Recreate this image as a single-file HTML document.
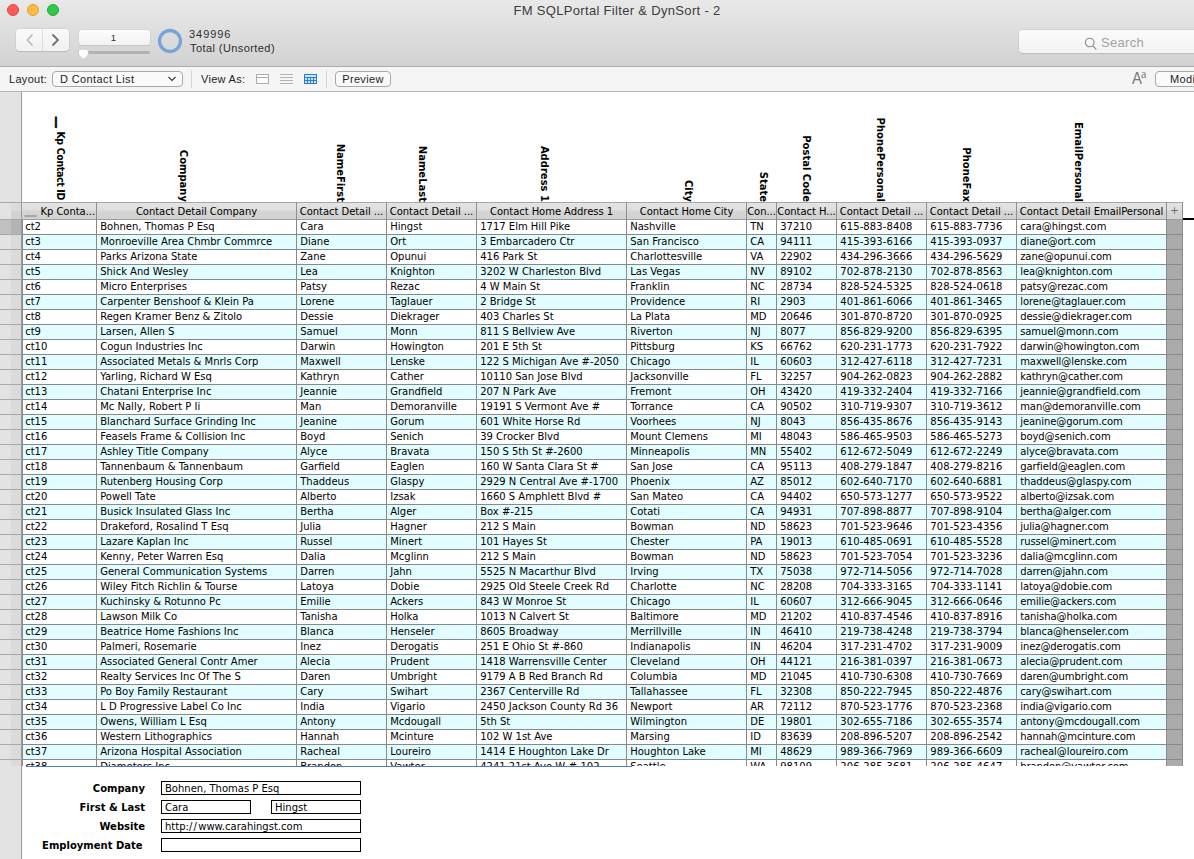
<!DOCTYPE html><html><head><meta charset="utf-8"><title>FM SQLPortal Filter &amp; DynSort - 2</title><style>
*{box-sizing:border-box;margin:0;padding:0}
html,body{width:1194px;height:859px;overflow:hidden;background:#fff}
body{position:relative;font-family:"DejaVu Sans","Liberation Sans",sans-serif;font-size:10px;color:#000}
.abs{position:absolute}
#top{left:0;top:0;width:1194px;height:66px;background:linear-gradient(#e9e9e9,#d2d2d2)}
#topline{left:0;top:66px;width:1194px;height:1px;background:#adadad}
#lbar{left:0;top:67px;width:1194px;height:24px;background:#f5f5f5}
#lbarline{left:0;top:91px;width:1194px;height:1px;background:#b4b4b4}
.sys{font-family:"Liberation Sans",sans-serif}
#title{left:0;top:3px;width:1234px;text-align:center;font-size:13px;letter-spacing:.32px;color:#3c3c3c;white-space:pre}
.tl{width:12px;height:12px;border-radius:50%;top:4px}
#strip{left:0;top:92px;width:21px;height:767px;background:#e3e3e3}
#stripb{left:21px;top:92px;width:1px;height:767px;background:#9a9a9a}
.row{left:22px;width:1144px;height:14px}
.c{position:absolute;top:0;height:14px;line-height:14px;white-space:pre;overflow:hidden;padding-left:3.2px}
.h{position:absolute;top:1px;height:15px;line-height:15px;letter-spacing:-.05px;white-space:pre;overflow:hidden;text-align:center}
.vl{position:absolute;font-weight:bold;white-space:pre;transform-origin:0 0;transform:rotate(90deg);line-height:12px;height:12px;width:105px;text-align:right;top:96.5px}
.lab{position:absolute;font-weight:bold;text-align:right;width:140px;left:5px;height:14px;line-height:14px;margin-top:1px}
.fld{position:absolute;border:1px solid #000;height:14px;line-height:12px;padding-left:3px;padding-top:1px;background:#fff;white-space:pre}
</style></head><body>
<div id="top" class="abs"></div><div id="topline" class="abs"></div><div id="lbar" class="abs"></div><div id="lbarline" class="abs"></div>
<div class="abs tl" style="left:7px;background:#fc5b57;border:1px solid #df4744"></div>
<div class="abs tl" style="left:27px;background:#fdbc40;border:1px solid #de9f34"></div>
<div class="abs tl" style="left:47px;background:#34c84a;border:1px solid #27aa35"></div>
<div id="title" class="abs sys">FM SQLPortal Filter &amp; DynSort - 2</div>
<div class="abs" style="left:16px;top:29px;width:53px;height:22px;border-radius:4px;background:linear-gradient(#fafafa,#f1f1f1);box-shadow:0 0 0 .5px #c8c8c8,0 1px 1px rgba(0,0,0,.18)"></div>
<div class="abs" style="left:42px;top:29px;width:1px;height:22px;background:#dcdcdc"></div>
<svg class="abs" style="left:16px;top:29px" width="53" height="22" viewBox="0 0 53 22"><path d="M16.5 5.5 L11.5 11 L16.5 16.5" fill="none" stroke="#b9b9b9" stroke-width="1.6"/><path d="M36.5 5.5 L42 11 L36.5 16.5" fill="none" stroke="#6e6e6e" stroke-width="1.8"/></svg>
<div class="abs sys" style="left:79px;top:30px;width:71px;height:15px;border-radius:3px;background:linear-gradient(#fcfcfc,#f2f2f2);box-shadow:0 0 0 .5px #cfcfcf,0 1px 1px rgba(0,0,0,.15);text-align:center;font-size:9.5px;line-height:16px;color:#333"><span style="position:relative;left:-1px">1</span></div>
<div class="abs" style="left:84px;top:51px;width:66px;height:3px;border-radius:1.5px;background:#b2b2b2"></div>
<svg class="abs" style="left:77px;top:48px" width="14" height="13" viewBox="0 0 14 13"><path d="M3.8 1.2 h5.4 a2.3 2.3 0 0 1 2.3 2.3 v2.6 q0 .6 -.5 1.1 l-3.8 3.7 q-.7 .6 -1.4 0 l-3.8 -3.7 q-.5 -.5 -.5 -1.1 v-2.6 a2.3 2.3 0 0 1 2.3 -2.3z" fill="#fff" stroke="#c2c2c2" stroke-width=".7"/></svg>
<svg class="abs" style="left:156px;top:27px" width="28" height="28" viewBox="0 0 28 28"><circle cx="14" cy="14" r="10.5" fill="none" stroke="#76a3d9" stroke-width="3.3"/></svg>
<div class="abs sys" style="left:189px;top:28px;font-size:11px;letter-spacing:.95px;line-height:13px;color:#2e2e2e;white-space:pre">349996</div>
<div class="abs sys" style="left:190px;top:42px;font-size:11px;letter-spacing:.42px;line-height:13px;color:#2e2e2e;white-space:pre">Total (Unsorted)</div>
<div class="abs" style="left:1019px;top:30px;width:190px;height:23px;border-radius:4px;background:linear-gradient(#fbfbfb,#f3f3f3);box-shadow:0 0 0 .5px #c6c6c6,0 1px 1px rgba(0,0,0,.15)"></div>
<svg class="abs" style="left:1083px;top:36px" width="16" height="16" viewBox="0 0 16 16"><circle cx="6.7" cy="6.5" r="4.3" fill="none" stroke="#8a8a8a" stroke-width="1.1"/><path d="M9.8 9.8 L13.3 13.3" stroke="#8a8a8a" stroke-width="1.2"/></svg>
<div class="abs sys" style="left:1101px;top:35px;font-size:13px;letter-spacing:.3px;line-height:16px;color:#a2a2a2">Search</div>
<div class="abs sys" style="left:9px;top:72px;font-size:11px;letter-spacing:.3px;line-height:14px;color:#1e1e1e;white-space:pre">Layout:</div>
<div class="abs" style="left:52px;top:71px;width:131px;height:16px;border-radius:4px;border:1px solid #a9a9a9;background:#fafafa"></div>
<div class="abs sys" style="left:60px;top:72px;font-size:11px;letter-spacing:.38px;line-height:14px;color:#1e1e1e;white-space:pre">D Contact List</div>
<svg class="abs" style="left:166px;top:74px" width="12" height="10" viewBox="0 0 12 10"><path d="M2.5 3 L6 6.5 L9.5 3" fill="none" stroke="#3a3a3a" stroke-width="1.1"/></svg>
<div class="abs" style="left:191px;top:70px;width:1px;height:18px;background:#d6d6d6"></div>
<div class="abs sys" style="left:201px;top:72px;font-size:11px;letter-spacing:.3px;line-height:14px;color:#1e1e1e;white-space:pre">View As:</div>
<svg class="abs" style="left:255px;top:73px" width="64" height="12" viewBox="0 0 64 12" shape-rendering="crispEdges"><rect x="1.5" y="1.5" width="12" height="9" fill="#fdfdfd" stroke="#ababab"/><rect x="2" y="4" width="11" height="1" fill="#ababab"/><rect x="25" y="1" width="13" height="1" fill="#b3b3b3"/><rect x="25" y="4" width="13" height="1" fill="#b3b3b3"/><rect x="25" y="7" width="13" height="1" fill="#b3b3b3"/><rect x="25" y="10" width="13" height="1" fill="#b3b3b3"/><rect x="49" y="1" width="13" height="10" fill="#3b77c8"/><rect x="50" y="2" width="11" height="2" fill="#b6f2ff"/><rect x="50" y="5" width="2" height="2" fill="#b6ecff"/><rect x="53" y="5" width="2" height="2" fill="#b6ecff"/><rect x="56" y="5" width="2" height="2" fill="#b6ecff"/><rect x="59" y="5" width="2" height="2" fill="#b6ecff"/><rect x="50" y="8" width="2" height="2" fill="#b6ecff"/><rect x="53" y="8" width="2" height="2" fill="#b6ecff"/><rect x="56" y="8" width="2" height="2" fill="#b6ecff"/><rect x="59" y="8" width="2" height="2" fill="#b6ecff"/></svg>
<div class="abs" style="left:326px;top:70px;width:1px;height:18px;background:#d6d6d6"></div>
<div class="abs sys" style="left:335px;top:71px;width:56px;height:16px;border-radius:4px;border:1px solid #a9a9a9;background:#fafafa;text-align:center;font-size:11px;letter-spacing:.35px;line-height:14px;color:#1e1e1e">Preview</div>
<div class="abs" style="left:1132px;top:68px;font-family:'Liberation Serif',serif;font-size:16px;line-height:20px;color:#777;white-space:pre"><span class="sys" style="font-size:16.5px;display:inline-block;transform:scaleX(.9);transform-origin:0 50%">A</span><span style="font-size:12px;position:relative;top:-6.5px;left:-2px">a</span></div>
<div class="abs sys" style="left:1155px;top:71px;width:60px;height:16px;border-radius:4px;border:1px solid #a9a9a9;background:#fafafa;font-size:11px;letter-spacing:.35px;line-height:14px;color:#1e1e1e;padding-left:14px;white-space:pre">Modify</div>
<div id="strip" class="abs"></div><div id="stripb" class="abs"></div>
<div class="abs" style="left:11px;top:203px;width:10px;height:563px;background:#dbdbdb"></div>
<div class="abs" style="left:0;top:220px;width:11px;height:14px;background:#c1c1c1"></div><div class="abs" style="left:11px;top:220px;width:10px;height:14px;background:#b4b4b4"></div>
<div class="abs" style="left:11px;top:211px;width:10px;height:8px;background:#d2d2d2"></div>
<div class="abs" style="left:0;top:219px;width:22px;height:1px;background:#a9a9a9"></div>
<div class="abs" style="left:0;top:234px;width:22px;height:1px;background:#a9a9a9"></div>
<div class="abs" style="left:0;top:249px;width:22px;height:1px;background:#a9a9a9"></div>
<div class="abs" style="left:0;top:264px;width:22px;height:1px;background:#a9a9a9"></div>
<div class="abs" style="left:0;top:279px;width:22px;height:1px;background:#a9a9a9"></div>
<div class="abs" style="left:0;top:294px;width:22px;height:1px;background:#a9a9a9"></div>
<div class="abs" style="left:0;top:309px;width:22px;height:1px;background:#a9a9a9"></div>
<div class="abs" style="left:0;top:324px;width:22px;height:1px;background:#a9a9a9"></div>
<div class="abs" style="left:0;top:339px;width:22px;height:1px;background:#a9a9a9"></div>
<div class="abs" style="left:0;top:354px;width:22px;height:1px;background:#a9a9a9"></div>
<div class="abs" style="left:0;top:369px;width:22px;height:1px;background:#a9a9a9"></div>
<div class="abs" style="left:0;top:384px;width:22px;height:1px;background:#a9a9a9"></div>
<div class="abs" style="left:0;top:399px;width:22px;height:1px;background:#a9a9a9"></div>
<div class="abs" style="left:0;top:414px;width:22px;height:1px;background:#a9a9a9"></div>
<div class="abs" style="left:0;top:429px;width:22px;height:1px;background:#a9a9a9"></div>
<div class="abs" style="left:0;top:444px;width:22px;height:1px;background:#a9a9a9"></div>
<div class="abs" style="left:0;top:459px;width:22px;height:1px;background:#a9a9a9"></div>
<div class="abs" style="left:0;top:474px;width:22px;height:1px;background:#a9a9a9"></div>
<div class="abs" style="left:0;top:489px;width:22px;height:1px;background:#a9a9a9"></div>
<div class="abs" style="left:0;top:504px;width:22px;height:1px;background:#a9a9a9"></div>
<div class="abs" style="left:0;top:519px;width:22px;height:1px;background:#a9a9a9"></div>
<div class="abs" style="left:0;top:534px;width:22px;height:1px;background:#a9a9a9"></div>
<div class="abs" style="left:0;top:549px;width:22px;height:1px;background:#a9a9a9"></div>
<div class="abs" style="left:0;top:564px;width:22px;height:1px;background:#a9a9a9"></div>
<div class="abs" style="left:0;top:579px;width:22px;height:1px;background:#a9a9a9"></div>
<div class="abs" style="left:0;top:594px;width:22px;height:1px;background:#a9a9a9"></div>
<div class="abs" style="left:0;top:609px;width:22px;height:1px;background:#a9a9a9"></div>
<div class="abs" style="left:0;top:624px;width:22px;height:1px;background:#a9a9a9"></div>
<div class="abs" style="left:0;top:639px;width:22px;height:1px;background:#a9a9a9"></div>
<div class="abs" style="left:0;top:654px;width:22px;height:1px;background:#a9a9a9"></div>
<div class="abs" style="left:0;top:669px;width:22px;height:1px;background:#a9a9a9"></div>
<div class="abs" style="left:0;top:684px;width:22px;height:1px;background:#a9a9a9"></div>
<div class="abs" style="left:0;top:699px;width:22px;height:1px;background:#a9a9a9"></div>
<div class="abs" style="left:0;top:714px;width:22px;height:1px;background:#a9a9a9"></div>
<div class="abs" style="left:0;top:729px;width:22px;height:1px;background:#a9a9a9"></div>
<div class="abs" style="left:0;top:744px;width:22px;height:1px;background:#a9a9a9"></div>
<div class="abs" style="left:0;top:759px;width:22px;height:1px;background:#a9a9a9"></div>
<div class="vl" style="left:66.5px;top:94.5px;letter-spacing:-.35px;font-size:10.5px;font-family:'DejaVu Sans Condensed','DejaVu Sans',sans-serif"><span style="letter-spacing:0;font-size:13px;position:relative;top:-1.5px;text-shadow:0 -1px 0 #000">__</span><span style="letter-spacing:0"> </span>Kp Contact ID</div>
<div class="vl" style="left:189px">Company</div>
<div class="vl" style="left:346px">NameFirst</div>
<div class="vl" style="left:428px">NameLast</div>
<div class="vl" style="left:550px">Address 1</div>
<div class="vl" style="left:694px">City</div>
<div class="vl" style="left:769px">State</div>
<div class="vl" style="left:811.5px">Postal Code</div>
<div class="vl" style="left:885.5px">PhonePersonal</div>
<div class="vl" style="left:971.5px">PhoneFax</div>
<div class="vl" style="left:1083.5px">EmailPersonal</div>
<div class="abs" style="left:0;top:202px;width:1183px;height:1px;background:#a8a8a8"></div>
<div class="abs" style="left:22px;top:203px;width:1160px;height:16px;background:linear-gradient(#e3e3e3 0,#dfdfdf 46%,#d5d5d5 48%,#d2d2d2 100%)">
<div class="h" style="left:0px;width:74px;text-align:left;padding-left:2.5px"><span style="color:#a8a8a8;font-weight:bold;font-size:12px;letter-spacing:0;position:relative;top:-1.5px;text-shadow:0 -1px 0 #a8a8a8">__</span><span style="margin-left:4px">Kp Conta...</span></div>
<div class="h" style="left:75px;width:199px">Contact Detail Company</div>
<div class="h" style="left:275px;width:89px">Contact Detail ...</div>
<div class="h" style="left:365px;width:89px">Contact Detail ...</div>
<div class="h" style="left:455px;width:149px">Contact Home Address 1</div>
<div class="h" style="left:605px;width:119px">Contact Home City</div>
<div class="h" style="left:725px;width:29px">Con...</div>
<div class="h" style="left:755px;width:59px">Contact H...</div>
<div class="h" style="left:815px;width:89px">Contact Detail ...</div>
<div class="h" style="left:905px;width:89px">Contact Detail ...</div>
<div class="h" style="left:995px;width:149px">Contact Detail EmailPersonal</div>
<div class="h" style="left:1145px;width:15px;color:#666;top:0">+</div>
</div>
<div class="abs row" style="top:220px;background:#fff">
<div class="c" style="left:0px;width:74px">ct2</div>
<div class="c" style="left:75px;width:199px">Bohnen, Thomas P Esq</div>
<div class="c" style="left:275px;width:89px">Cara</div>
<div class="c" style="left:365px;width:89px">Hingst</div>
<div class="c" style="left:455px;width:149px">1717 Elm Hill Pike</div>
<div class="c" style="left:605px;width:119px">Nashville</div>
<div class="c" style="left:725px;width:29px">TN</div>
<div class="c" style="left:755px;width:59px">37210</div>
<div class="c" style="left:815px;width:89px;letter-spacing:.12px">615-883-8408</div>
<div class="c" style="left:905px;width:89px;letter-spacing:.12px">615-883-7736</div>
<div class="c" style="left:995px;width:149px;letter-spacing:-.08px">cara@hingst.com</div>
</div>
<div class="abs row" style="top:235px;background:#e2fdff">
<div class="c" style="left:0px;width:74px">ct3</div>
<div class="c" style="left:75px;width:199px">Monroeville Area Chmbr Commrce</div>
<div class="c" style="left:275px;width:89px">Diane</div>
<div class="c" style="left:365px;width:89px">Ort</div>
<div class="c" style="left:455px;width:149px">3 Embarcadero Ctr</div>
<div class="c" style="left:605px;width:119px">San Francisco</div>
<div class="c" style="left:725px;width:29px">CA</div>
<div class="c" style="left:755px;width:59px">94111</div>
<div class="c" style="left:815px;width:89px;letter-spacing:.12px">415-393-6166</div>
<div class="c" style="left:905px;width:89px;letter-spacing:.12px">415-393-0937</div>
<div class="c" style="left:995px;width:149px;letter-spacing:-.08px">diane@ort.com</div>
</div>
<div class="abs row" style="top:250px;background:#fff">
<div class="c" style="left:0px;width:74px">ct4</div>
<div class="c" style="left:75px;width:199px">Parks Arizona State</div>
<div class="c" style="left:275px;width:89px">Zane</div>
<div class="c" style="left:365px;width:89px">Opunui</div>
<div class="c" style="left:455px;width:149px">416 Park St</div>
<div class="c" style="left:605px;width:119px">Charlottesville</div>
<div class="c" style="left:725px;width:29px">VA</div>
<div class="c" style="left:755px;width:59px">22902</div>
<div class="c" style="left:815px;width:89px;letter-spacing:.12px">434-296-3666</div>
<div class="c" style="left:905px;width:89px;letter-spacing:.12px">434-296-5629</div>
<div class="c" style="left:995px;width:149px;letter-spacing:-.08px">zane@opunui.com</div>
</div>
<div class="abs row" style="top:265px;background:#e2fdff">
<div class="c" style="left:0px;width:74px">ct5</div>
<div class="c" style="left:75px;width:199px">Shick And Wesley</div>
<div class="c" style="left:275px;width:89px">Lea</div>
<div class="c" style="left:365px;width:89px">Knighton</div>
<div class="c" style="left:455px;width:149px">3202 W Charleston Blvd</div>
<div class="c" style="left:605px;width:119px">Las Vegas</div>
<div class="c" style="left:725px;width:29px">NV</div>
<div class="c" style="left:755px;width:59px">89102</div>
<div class="c" style="left:815px;width:89px;letter-spacing:.12px">702-878-2130</div>
<div class="c" style="left:905px;width:89px;letter-spacing:.12px">702-878-8563</div>
<div class="c" style="left:995px;width:149px;letter-spacing:-.08px">lea@knighton.com</div>
</div>
<div class="abs row" style="top:280px;background:#fff">
<div class="c" style="left:0px;width:74px">ct6</div>
<div class="c" style="left:75px;width:199px">Micro Enterprises</div>
<div class="c" style="left:275px;width:89px">Patsy</div>
<div class="c" style="left:365px;width:89px">Rezac</div>
<div class="c" style="left:455px;width:149px">4 W Main St</div>
<div class="c" style="left:605px;width:119px">Franklin</div>
<div class="c" style="left:725px;width:29px">NC</div>
<div class="c" style="left:755px;width:59px">28734</div>
<div class="c" style="left:815px;width:89px;letter-spacing:.12px">828-524-5325</div>
<div class="c" style="left:905px;width:89px;letter-spacing:.12px">828-524-0618</div>
<div class="c" style="left:995px;width:149px;letter-spacing:-.08px">patsy@rezac.com</div>
</div>
<div class="abs row" style="top:295px;background:#e2fdff">
<div class="c" style="left:0px;width:74px">ct7</div>
<div class="c" style="left:75px;width:199px">Carpenter Benshoof &amp; Klein Pa</div>
<div class="c" style="left:275px;width:89px">Lorene</div>
<div class="c" style="left:365px;width:89px">Taglauer</div>
<div class="c" style="left:455px;width:149px">2 Bridge St</div>
<div class="c" style="left:605px;width:119px">Providence</div>
<div class="c" style="left:725px;width:29px">RI</div>
<div class="c" style="left:755px;width:59px">2903</div>
<div class="c" style="left:815px;width:89px;letter-spacing:.12px">401-861-6066</div>
<div class="c" style="left:905px;width:89px;letter-spacing:.12px">401-861-3465</div>
<div class="c" style="left:995px;width:149px;letter-spacing:-.08px">lorene@taglauer.com</div>
</div>
<div class="abs row" style="top:310px;background:#fff">
<div class="c" style="left:0px;width:74px">ct8</div>
<div class="c" style="left:75px;width:199px">Regen Kramer Benz &amp; Zitolo</div>
<div class="c" style="left:275px;width:89px">Dessie</div>
<div class="c" style="left:365px;width:89px">Diekrager</div>
<div class="c" style="left:455px;width:149px">403 Charles St</div>
<div class="c" style="left:605px;width:119px">La Plata</div>
<div class="c" style="left:725px;width:29px">MD</div>
<div class="c" style="left:755px;width:59px">20646</div>
<div class="c" style="left:815px;width:89px;letter-spacing:.12px">301-870-8720</div>
<div class="c" style="left:905px;width:89px;letter-spacing:.12px">301-870-0925</div>
<div class="c" style="left:995px;width:149px;letter-spacing:-.08px">dessie@diekrager.com</div>
</div>
<div class="abs row" style="top:325px;background:#e2fdff">
<div class="c" style="left:0px;width:74px">ct9</div>
<div class="c" style="left:75px;width:199px">Larsen, Allen S</div>
<div class="c" style="left:275px;width:89px">Samuel</div>
<div class="c" style="left:365px;width:89px">Monn</div>
<div class="c" style="left:455px;width:149px">811 S Bellview Ave</div>
<div class="c" style="left:605px;width:119px">Riverton</div>
<div class="c" style="left:725px;width:29px">NJ</div>
<div class="c" style="left:755px;width:59px">8077</div>
<div class="c" style="left:815px;width:89px;letter-spacing:.12px">856-829-9200</div>
<div class="c" style="left:905px;width:89px;letter-spacing:.12px">856-829-6395</div>
<div class="c" style="left:995px;width:149px;letter-spacing:-.08px">samuel@monn.com</div>
</div>
<div class="abs row" style="top:340px;background:#fff">
<div class="c" style="left:0px;width:74px">ct10</div>
<div class="c" style="left:75px;width:199px">Cogun Industries Inc</div>
<div class="c" style="left:275px;width:89px">Darwin</div>
<div class="c" style="left:365px;width:89px">Howington</div>
<div class="c" style="left:455px;width:149px">201 E 5th St</div>
<div class="c" style="left:605px;width:119px">Pittsburg</div>
<div class="c" style="left:725px;width:29px">KS</div>
<div class="c" style="left:755px;width:59px">66762</div>
<div class="c" style="left:815px;width:89px;letter-spacing:.12px">620-231-1773</div>
<div class="c" style="left:905px;width:89px;letter-spacing:.12px">620-231-7922</div>
<div class="c" style="left:995px;width:149px;letter-spacing:-.08px">darwin@howington.com</div>
</div>
<div class="abs row" style="top:355px;background:#e2fdff">
<div class="c" style="left:0px;width:74px">ct11</div>
<div class="c" style="left:75px;width:199px">Associated Metals &amp; Mnrls Corp</div>
<div class="c" style="left:275px;width:89px">Maxwell</div>
<div class="c" style="left:365px;width:89px">Lenske</div>
<div class="c" style="left:455px;width:149px">122 S Michigan Ave #-2050</div>
<div class="c" style="left:605px;width:119px">Chicago</div>
<div class="c" style="left:725px;width:29px">IL</div>
<div class="c" style="left:755px;width:59px">60603</div>
<div class="c" style="left:815px;width:89px;letter-spacing:.12px">312-427-6118</div>
<div class="c" style="left:905px;width:89px;letter-spacing:.12px">312-427-7231</div>
<div class="c" style="left:995px;width:149px;letter-spacing:-.08px">maxwell@lenske.com</div>
</div>
<div class="abs row" style="top:370px;background:#fff">
<div class="c" style="left:0px;width:74px">ct12</div>
<div class="c" style="left:75px;width:199px">Yarling, Richard W Esq</div>
<div class="c" style="left:275px;width:89px">Kathryn</div>
<div class="c" style="left:365px;width:89px">Cather</div>
<div class="c" style="left:455px;width:149px">10110 San Jose Blvd</div>
<div class="c" style="left:605px;width:119px">Jacksonville</div>
<div class="c" style="left:725px;width:29px">FL</div>
<div class="c" style="left:755px;width:59px">32257</div>
<div class="c" style="left:815px;width:89px;letter-spacing:.12px">904-262-0823</div>
<div class="c" style="left:905px;width:89px;letter-spacing:.12px">904-262-2882</div>
<div class="c" style="left:995px;width:149px;letter-spacing:-.08px">kathryn@cather.com</div>
</div>
<div class="abs row" style="top:385px;background:#e2fdff">
<div class="c" style="left:0px;width:74px">ct13</div>
<div class="c" style="left:75px;width:199px">Chatani Enterprise Inc</div>
<div class="c" style="left:275px;width:89px">Jeannie</div>
<div class="c" style="left:365px;width:89px">Grandfield</div>
<div class="c" style="left:455px;width:149px">207 N Park Ave</div>
<div class="c" style="left:605px;width:119px">Fremont</div>
<div class="c" style="left:725px;width:29px">OH</div>
<div class="c" style="left:755px;width:59px">43420</div>
<div class="c" style="left:815px;width:89px;letter-spacing:.12px">419-332-2404</div>
<div class="c" style="left:905px;width:89px;letter-spacing:.12px">419-332-7166</div>
<div class="c" style="left:995px;width:149px;letter-spacing:-.08px">jeannie@grandfield.com</div>
</div>
<div class="abs row" style="top:400px;background:#fff">
<div class="c" style="left:0px;width:74px">ct14</div>
<div class="c" style="left:75px;width:199px">Mc Nally, Robert P Ii</div>
<div class="c" style="left:275px;width:89px">Man</div>
<div class="c" style="left:365px;width:89px">Demoranville</div>
<div class="c" style="left:455px;width:149px">19191 S Vermont Ave #</div>
<div class="c" style="left:605px;width:119px">Torrance</div>
<div class="c" style="left:725px;width:29px">CA</div>
<div class="c" style="left:755px;width:59px">90502</div>
<div class="c" style="left:815px;width:89px;letter-spacing:.12px">310-719-9307</div>
<div class="c" style="left:905px;width:89px;letter-spacing:.12px">310-719-3612</div>
<div class="c" style="left:995px;width:149px;letter-spacing:-.08px">man@demoranville.com</div>
</div>
<div class="abs row" style="top:415px;background:#e2fdff">
<div class="c" style="left:0px;width:74px">ct15</div>
<div class="c" style="left:75px;width:199px">Blanchard Surface Grinding Inc</div>
<div class="c" style="left:275px;width:89px">Jeanine</div>
<div class="c" style="left:365px;width:89px">Gorum</div>
<div class="c" style="left:455px;width:149px">601 White Horse Rd</div>
<div class="c" style="left:605px;width:119px">Voorhees</div>
<div class="c" style="left:725px;width:29px">NJ</div>
<div class="c" style="left:755px;width:59px">8043</div>
<div class="c" style="left:815px;width:89px;letter-spacing:.12px">856-435-8676</div>
<div class="c" style="left:905px;width:89px;letter-spacing:.12px">856-435-9143</div>
<div class="c" style="left:995px;width:149px;letter-spacing:-.08px">jeanine@gorum.com</div>
</div>
<div class="abs row" style="top:430px;background:#fff">
<div class="c" style="left:0px;width:74px">ct16</div>
<div class="c" style="left:75px;width:199px">Feasels Frame &amp; Collision Inc</div>
<div class="c" style="left:275px;width:89px">Boyd</div>
<div class="c" style="left:365px;width:89px">Senich</div>
<div class="c" style="left:455px;width:149px">39 Crocker Blvd</div>
<div class="c" style="left:605px;width:119px">Mount Clemens</div>
<div class="c" style="left:725px;width:29px">MI</div>
<div class="c" style="left:755px;width:59px">48043</div>
<div class="c" style="left:815px;width:89px;letter-spacing:.12px">586-465-9503</div>
<div class="c" style="left:905px;width:89px;letter-spacing:.12px">586-465-5273</div>
<div class="c" style="left:995px;width:149px;letter-spacing:-.08px">boyd@senich.com</div>
</div>
<div class="abs row" style="top:445px;background:#e2fdff">
<div class="c" style="left:0px;width:74px">ct17</div>
<div class="c" style="left:75px;width:199px">Ashley Title Company</div>
<div class="c" style="left:275px;width:89px">Alyce</div>
<div class="c" style="left:365px;width:89px">Bravata</div>
<div class="c" style="left:455px;width:149px">150 S 5th St #-2600</div>
<div class="c" style="left:605px;width:119px">Minneapolis</div>
<div class="c" style="left:725px;width:29px">MN</div>
<div class="c" style="left:755px;width:59px">55402</div>
<div class="c" style="left:815px;width:89px;letter-spacing:.12px">612-672-5049</div>
<div class="c" style="left:905px;width:89px;letter-spacing:.12px">612-672-2249</div>
<div class="c" style="left:995px;width:149px;letter-spacing:-.08px">alyce@bravata.com</div>
</div>
<div class="abs row" style="top:460px;background:#fff">
<div class="c" style="left:0px;width:74px">ct18</div>
<div class="c" style="left:75px;width:199px">Tannenbaum &amp; Tannenbaum</div>
<div class="c" style="left:275px;width:89px">Garfield</div>
<div class="c" style="left:365px;width:89px">Eaglen</div>
<div class="c" style="left:455px;width:149px">160 W Santa Clara St #</div>
<div class="c" style="left:605px;width:119px">San Jose</div>
<div class="c" style="left:725px;width:29px">CA</div>
<div class="c" style="left:755px;width:59px">95113</div>
<div class="c" style="left:815px;width:89px;letter-spacing:.12px">408-279-1847</div>
<div class="c" style="left:905px;width:89px;letter-spacing:.12px">408-279-8216</div>
<div class="c" style="left:995px;width:149px;letter-spacing:-.08px">garfield@eaglen.com</div>
</div>
<div class="abs row" style="top:475px;background:#e2fdff">
<div class="c" style="left:0px;width:74px">ct19</div>
<div class="c" style="left:75px;width:199px">Rutenberg Housing Corp</div>
<div class="c" style="left:275px;width:89px">Thaddeus</div>
<div class="c" style="left:365px;width:89px">Glaspy</div>
<div class="c" style="left:455px;width:149px">2929 N Central Ave #-1700</div>
<div class="c" style="left:605px;width:119px">Phoenix</div>
<div class="c" style="left:725px;width:29px">AZ</div>
<div class="c" style="left:755px;width:59px">85012</div>
<div class="c" style="left:815px;width:89px;letter-spacing:.12px">602-640-7170</div>
<div class="c" style="left:905px;width:89px;letter-spacing:.12px">602-640-6881</div>
<div class="c" style="left:995px;width:149px;letter-spacing:-.08px">thaddeus@glaspy.com</div>
</div>
<div class="abs row" style="top:490px;background:#fff">
<div class="c" style="left:0px;width:74px">ct20</div>
<div class="c" style="left:75px;width:199px">Powell Tate</div>
<div class="c" style="left:275px;width:89px">Alberto</div>
<div class="c" style="left:365px;width:89px">Izsak</div>
<div class="c" style="left:455px;width:149px">1660 S Amphlett Blvd #</div>
<div class="c" style="left:605px;width:119px">San Mateo</div>
<div class="c" style="left:725px;width:29px">CA</div>
<div class="c" style="left:755px;width:59px">94402</div>
<div class="c" style="left:815px;width:89px;letter-spacing:.12px">650-573-1277</div>
<div class="c" style="left:905px;width:89px;letter-spacing:.12px">650-573-9522</div>
<div class="c" style="left:995px;width:149px;letter-spacing:-.08px">alberto@izsak.com</div>
</div>
<div class="abs row" style="top:505px;background:#e2fdff">
<div class="c" style="left:0px;width:74px">ct21</div>
<div class="c" style="left:75px;width:199px">Busick Insulated Glass Inc</div>
<div class="c" style="left:275px;width:89px">Bertha</div>
<div class="c" style="left:365px;width:89px">Alger</div>
<div class="c" style="left:455px;width:149px">Box #-215</div>
<div class="c" style="left:605px;width:119px">Cotati</div>
<div class="c" style="left:725px;width:29px">CA</div>
<div class="c" style="left:755px;width:59px">94931</div>
<div class="c" style="left:815px;width:89px;letter-spacing:.12px">707-898-8877</div>
<div class="c" style="left:905px;width:89px;letter-spacing:.12px">707-898-9104</div>
<div class="c" style="left:995px;width:149px;letter-spacing:-.08px">bertha@alger.com</div>
</div>
<div class="abs row" style="top:520px;background:#fff">
<div class="c" style="left:0px;width:74px">ct22</div>
<div class="c" style="left:75px;width:199px">Drakeford, Rosalind T Esq</div>
<div class="c" style="left:275px;width:89px">Julia</div>
<div class="c" style="left:365px;width:89px">Hagner</div>
<div class="c" style="left:455px;width:149px">212 S Main</div>
<div class="c" style="left:605px;width:119px">Bowman</div>
<div class="c" style="left:725px;width:29px">ND</div>
<div class="c" style="left:755px;width:59px">58623</div>
<div class="c" style="left:815px;width:89px;letter-spacing:.12px">701-523-9646</div>
<div class="c" style="left:905px;width:89px;letter-spacing:.12px">701-523-4356</div>
<div class="c" style="left:995px;width:149px;letter-spacing:-.08px">julia@hagner.com</div>
</div>
<div class="abs row" style="top:535px;background:#e2fdff">
<div class="c" style="left:0px;width:74px">ct23</div>
<div class="c" style="left:75px;width:199px">Lazare Kaplan Inc</div>
<div class="c" style="left:275px;width:89px">Russel</div>
<div class="c" style="left:365px;width:89px">Minert</div>
<div class="c" style="left:455px;width:149px">101 Hayes St</div>
<div class="c" style="left:605px;width:119px">Chester</div>
<div class="c" style="left:725px;width:29px">PA</div>
<div class="c" style="left:755px;width:59px">19013</div>
<div class="c" style="left:815px;width:89px;letter-spacing:.12px">610-485-0691</div>
<div class="c" style="left:905px;width:89px;letter-spacing:.12px">610-485-5528</div>
<div class="c" style="left:995px;width:149px;letter-spacing:-.08px">russel@minert.com</div>
</div>
<div class="abs row" style="top:550px;background:#fff">
<div class="c" style="left:0px;width:74px">ct24</div>
<div class="c" style="left:75px;width:199px">Kenny, Peter Warren Esq</div>
<div class="c" style="left:275px;width:89px">Dalia</div>
<div class="c" style="left:365px;width:89px">Mcglinn</div>
<div class="c" style="left:455px;width:149px">212 S Main</div>
<div class="c" style="left:605px;width:119px">Bowman</div>
<div class="c" style="left:725px;width:29px">ND</div>
<div class="c" style="left:755px;width:59px">58623</div>
<div class="c" style="left:815px;width:89px;letter-spacing:.12px">701-523-7054</div>
<div class="c" style="left:905px;width:89px;letter-spacing:.12px">701-523-3236</div>
<div class="c" style="left:995px;width:149px;letter-spacing:-.08px">dalia@mcglinn.com</div>
</div>
<div class="abs row" style="top:565px;background:#e2fdff">
<div class="c" style="left:0px;width:74px">ct25</div>
<div class="c" style="left:75px;width:199px">General Communication Systems</div>
<div class="c" style="left:275px;width:89px">Darren</div>
<div class="c" style="left:365px;width:89px">Jahn</div>
<div class="c" style="left:455px;width:149px">5525 N Macarthur Blvd</div>
<div class="c" style="left:605px;width:119px">Irving</div>
<div class="c" style="left:725px;width:29px">TX</div>
<div class="c" style="left:755px;width:59px">75038</div>
<div class="c" style="left:815px;width:89px;letter-spacing:.12px">972-714-5056</div>
<div class="c" style="left:905px;width:89px;letter-spacing:.12px">972-714-7028</div>
<div class="c" style="left:995px;width:149px;letter-spacing:-.08px">darren@jahn.com</div>
</div>
<div class="abs row" style="top:580px;background:#fff">
<div class="c" style="left:0px;width:74px">ct26</div>
<div class="c" style="left:75px;width:199px">Wiley Fitch Richlin &amp; Tourse</div>
<div class="c" style="left:275px;width:89px">Latoya</div>
<div class="c" style="left:365px;width:89px">Dobie</div>
<div class="c" style="left:455px;width:149px">2925 Old Steele Creek Rd</div>
<div class="c" style="left:605px;width:119px">Charlotte</div>
<div class="c" style="left:725px;width:29px">NC</div>
<div class="c" style="left:755px;width:59px">28208</div>
<div class="c" style="left:815px;width:89px;letter-spacing:.12px">704-333-3165</div>
<div class="c" style="left:905px;width:89px;letter-spacing:.12px">704-333-1141</div>
<div class="c" style="left:995px;width:149px;letter-spacing:-.08px">latoya@dobie.com</div>
</div>
<div class="abs row" style="top:595px;background:#e2fdff">
<div class="c" style="left:0px;width:74px">ct27</div>
<div class="c" style="left:75px;width:199px">Kuchinsky &amp; Rotunno Pc</div>
<div class="c" style="left:275px;width:89px">Emilie</div>
<div class="c" style="left:365px;width:89px">Ackers</div>
<div class="c" style="left:455px;width:149px">843 W Monroe St</div>
<div class="c" style="left:605px;width:119px">Chicago</div>
<div class="c" style="left:725px;width:29px">IL</div>
<div class="c" style="left:755px;width:59px">60607</div>
<div class="c" style="left:815px;width:89px;letter-spacing:.12px">312-666-9045</div>
<div class="c" style="left:905px;width:89px;letter-spacing:.12px">312-666-0646</div>
<div class="c" style="left:995px;width:149px;letter-spacing:-.08px">emilie@ackers.com</div>
</div>
<div class="abs row" style="top:610px;background:#fff">
<div class="c" style="left:0px;width:74px">ct28</div>
<div class="c" style="left:75px;width:199px">Lawson Milk Co</div>
<div class="c" style="left:275px;width:89px">Tanisha</div>
<div class="c" style="left:365px;width:89px">Holka</div>
<div class="c" style="left:455px;width:149px">1013 N Calvert St</div>
<div class="c" style="left:605px;width:119px">Baltimore</div>
<div class="c" style="left:725px;width:29px">MD</div>
<div class="c" style="left:755px;width:59px">21202</div>
<div class="c" style="left:815px;width:89px;letter-spacing:.12px">410-837-4546</div>
<div class="c" style="left:905px;width:89px;letter-spacing:.12px">410-837-8916</div>
<div class="c" style="left:995px;width:149px;letter-spacing:-.08px">tanisha@holka.com</div>
</div>
<div class="abs row" style="top:625px;background:#e2fdff">
<div class="c" style="left:0px;width:74px">ct29</div>
<div class="c" style="left:75px;width:199px">Beatrice Home Fashions Inc</div>
<div class="c" style="left:275px;width:89px">Blanca</div>
<div class="c" style="left:365px;width:89px">Henseler</div>
<div class="c" style="left:455px;width:149px">8605 Broadway</div>
<div class="c" style="left:605px;width:119px">Merrillville</div>
<div class="c" style="left:725px;width:29px">IN</div>
<div class="c" style="left:755px;width:59px">46410</div>
<div class="c" style="left:815px;width:89px;letter-spacing:.12px">219-738-4248</div>
<div class="c" style="left:905px;width:89px;letter-spacing:.12px">219-738-3794</div>
<div class="c" style="left:995px;width:149px;letter-spacing:-.08px">blanca@henseler.com</div>
</div>
<div class="abs row" style="top:640px;background:#fff">
<div class="c" style="left:0px;width:74px">ct30</div>
<div class="c" style="left:75px;width:199px">Palmeri, Rosemarie</div>
<div class="c" style="left:275px;width:89px">Inez</div>
<div class="c" style="left:365px;width:89px">Derogatis</div>
<div class="c" style="left:455px;width:149px">251 E Ohio St #-860</div>
<div class="c" style="left:605px;width:119px">Indianapolis</div>
<div class="c" style="left:725px;width:29px">IN</div>
<div class="c" style="left:755px;width:59px">46204</div>
<div class="c" style="left:815px;width:89px;letter-spacing:.12px">317-231-4702</div>
<div class="c" style="left:905px;width:89px;letter-spacing:.12px">317-231-9009</div>
<div class="c" style="left:995px;width:149px;letter-spacing:-.08px">inez@derogatis.com</div>
</div>
<div class="abs row" style="top:655px;background:#e2fdff">
<div class="c" style="left:0px;width:74px">ct31</div>
<div class="c" style="left:75px;width:199px">Associated General Contr Amer</div>
<div class="c" style="left:275px;width:89px">Alecia</div>
<div class="c" style="left:365px;width:89px">Prudent</div>
<div class="c" style="left:455px;width:149px">1418 Warrensville Center</div>
<div class="c" style="left:605px;width:119px">Cleveland</div>
<div class="c" style="left:725px;width:29px">OH</div>
<div class="c" style="left:755px;width:59px">44121</div>
<div class="c" style="left:815px;width:89px;letter-spacing:.12px">216-381-0397</div>
<div class="c" style="left:905px;width:89px;letter-spacing:.12px">216-381-0673</div>
<div class="c" style="left:995px;width:149px;letter-spacing:-.08px">alecia@prudent.com</div>
</div>
<div class="abs row" style="top:670px;background:#fff">
<div class="c" style="left:0px;width:74px">ct32</div>
<div class="c" style="left:75px;width:199px">Realty Services Inc Of The S</div>
<div class="c" style="left:275px;width:89px">Daren</div>
<div class="c" style="left:365px;width:89px">Umbright</div>
<div class="c" style="left:455px;width:149px">9179 A B Red Branch Rd</div>
<div class="c" style="left:605px;width:119px">Columbia</div>
<div class="c" style="left:725px;width:29px">MD</div>
<div class="c" style="left:755px;width:59px">21045</div>
<div class="c" style="left:815px;width:89px;letter-spacing:.12px">410-730-6308</div>
<div class="c" style="left:905px;width:89px;letter-spacing:.12px">410-730-7669</div>
<div class="c" style="left:995px;width:149px;letter-spacing:-.08px">daren@umbright.com</div>
</div>
<div class="abs row" style="top:685px;background:#e2fdff">
<div class="c" style="left:0px;width:74px">ct33</div>
<div class="c" style="left:75px;width:199px">Po Boy Family Restaurant</div>
<div class="c" style="left:275px;width:89px">Cary</div>
<div class="c" style="left:365px;width:89px">Swihart</div>
<div class="c" style="left:455px;width:149px">2367 Centerville Rd</div>
<div class="c" style="left:605px;width:119px">Tallahassee</div>
<div class="c" style="left:725px;width:29px">FL</div>
<div class="c" style="left:755px;width:59px">32308</div>
<div class="c" style="left:815px;width:89px;letter-spacing:.12px">850-222-7945</div>
<div class="c" style="left:905px;width:89px;letter-spacing:.12px">850-222-4876</div>
<div class="c" style="left:995px;width:149px;letter-spacing:-.08px">cary@swihart.com</div>
</div>
<div class="abs row" style="top:700px;background:#fff">
<div class="c" style="left:0px;width:74px">ct34</div>
<div class="c" style="left:75px;width:199px">L D Progressive Label Co Inc</div>
<div class="c" style="left:275px;width:89px">India</div>
<div class="c" style="left:365px;width:89px">Vigario</div>
<div class="c" style="left:455px;width:149px">2450 Jackson County Rd 36</div>
<div class="c" style="left:605px;width:119px">Newport</div>
<div class="c" style="left:725px;width:29px">AR</div>
<div class="c" style="left:755px;width:59px">72112</div>
<div class="c" style="left:815px;width:89px;letter-spacing:.12px">870-523-1776</div>
<div class="c" style="left:905px;width:89px;letter-spacing:.12px">870-523-2368</div>
<div class="c" style="left:995px;width:149px;letter-spacing:-.08px">india@vigario.com</div>
</div>
<div class="abs row" style="top:715px;background:#e2fdff">
<div class="c" style="left:0px;width:74px">ct35</div>
<div class="c" style="left:75px;width:199px">Owens, William L Esq</div>
<div class="c" style="left:275px;width:89px">Antony</div>
<div class="c" style="left:365px;width:89px">Mcdougall</div>
<div class="c" style="left:455px;width:149px">5th St</div>
<div class="c" style="left:605px;width:119px">Wilmington</div>
<div class="c" style="left:725px;width:29px">DE</div>
<div class="c" style="left:755px;width:59px">19801</div>
<div class="c" style="left:815px;width:89px;letter-spacing:.12px">302-655-7186</div>
<div class="c" style="left:905px;width:89px;letter-spacing:.12px">302-655-3574</div>
<div class="c" style="left:995px;width:149px;letter-spacing:-.08px">antony@mcdougall.com</div>
</div>
<div class="abs row" style="top:730px;background:#fff">
<div class="c" style="left:0px;width:74px">ct36</div>
<div class="c" style="left:75px;width:199px">Western Lithographics</div>
<div class="c" style="left:275px;width:89px">Hannah</div>
<div class="c" style="left:365px;width:89px">Mcinture</div>
<div class="c" style="left:455px;width:149px">102 W 1st Ave</div>
<div class="c" style="left:605px;width:119px">Marsing</div>
<div class="c" style="left:725px;width:29px">ID</div>
<div class="c" style="left:755px;width:59px">83639</div>
<div class="c" style="left:815px;width:89px;letter-spacing:.12px">208-896-5207</div>
<div class="c" style="left:905px;width:89px;letter-spacing:.12px">208-896-2542</div>
<div class="c" style="left:995px;width:149px;letter-spacing:-.08px">hannah@mcinture.com</div>
</div>
<div class="abs row" style="top:745px;background:#e2fdff">
<div class="c" style="left:0px;width:74px">ct37</div>
<div class="c" style="left:75px;width:199px">Arizona Hospital Association</div>
<div class="c" style="left:275px;width:89px">Racheal</div>
<div class="c" style="left:365px;width:89px">Loureiro</div>
<div class="c" style="left:455px;width:149px">1414 E Houghton Lake Dr</div>
<div class="c" style="left:605px;width:119px">Houghton Lake</div>
<div class="c" style="left:725px;width:29px">MI</div>
<div class="c" style="left:755px;width:59px">48629</div>
<div class="c" style="left:815px;width:89px;letter-spacing:.12px">989-366-7969</div>
<div class="c" style="left:905px;width:89px;letter-spacing:.12px">989-366-6609</div>
<div class="c" style="left:995px;width:149px;letter-spacing:-.08px">racheal@loureiro.com</div>
</div>
<div class="abs row" style="top:760px;background:#fff">
<div class="c" style="left:0px;width:74px">ct38</div>
<div class="c" style="left:75px;width:199px">Diameters Inc</div>
<div class="c" style="left:275px;width:89px">Brandon</div>
<div class="c" style="left:365px;width:89px">Vawter</div>
<div class="c" style="left:455px;width:149px">4241 21st Ave W #-102</div>
<div class="c" style="left:605px;width:119px">Seattle</div>
<div class="c" style="left:725px;width:29px">WA</div>
<div class="c" style="left:755px;width:59px">98109</div>
<div class="c" style="left:815px;width:89px;letter-spacing:.12px">206-285-3681</div>
<div class="c" style="left:905px;width:89px;letter-spacing:.12px">206-285-4647</div>
<div class="c" style="left:995px;width:149px;letter-spacing:-.08px">brandon@vawter.com</div>
</div>
<div class="abs" style="left:1167px;top:220px;width:15px;height:560px;background:#ababab"></div>
<div class="abs" style="left:22px;top:219px;width:1161px;height:1px;background:#9c9c9c"></div>
<div class="abs" style="left:22px;top:234px;width:1161px;height:1px;background:#868a8a"></div>
<div class="abs" style="left:22px;top:249px;width:1161px;height:1px;background:#868a8a"></div>
<div class="abs" style="left:22px;top:264px;width:1161px;height:1px;background:#868a8a"></div>
<div class="abs" style="left:22px;top:279px;width:1161px;height:1px;background:#868a8a"></div>
<div class="abs" style="left:22px;top:294px;width:1161px;height:1px;background:#868a8a"></div>
<div class="abs" style="left:22px;top:309px;width:1161px;height:1px;background:#868a8a"></div>
<div class="abs" style="left:22px;top:324px;width:1161px;height:1px;background:#868a8a"></div>
<div class="abs" style="left:22px;top:339px;width:1161px;height:1px;background:#868a8a"></div>
<div class="abs" style="left:22px;top:354px;width:1161px;height:1px;background:#868a8a"></div>
<div class="abs" style="left:22px;top:369px;width:1161px;height:1px;background:#868a8a"></div>
<div class="abs" style="left:22px;top:384px;width:1161px;height:1px;background:#868a8a"></div>
<div class="abs" style="left:22px;top:399px;width:1161px;height:1px;background:#868a8a"></div>
<div class="abs" style="left:22px;top:414px;width:1161px;height:1px;background:#868a8a"></div>
<div class="abs" style="left:22px;top:429px;width:1161px;height:1px;background:#868a8a"></div>
<div class="abs" style="left:22px;top:444px;width:1161px;height:1px;background:#868a8a"></div>
<div class="abs" style="left:22px;top:459px;width:1161px;height:1px;background:#868a8a"></div>
<div class="abs" style="left:22px;top:474px;width:1161px;height:1px;background:#868a8a"></div>
<div class="abs" style="left:22px;top:489px;width:1161px;height:1px;background:#868a8a"></div>
<div class="abs" style="left:22px;top:504px;width:1161px;height:1px;background:#868a8a"></div>
<div class="abs" style="left:22px;top:519px;width:1161px;height:1px;background:#868a8a"></div>
<div class="abs" style="left:22px;top:534px;width:1161px;height:1px;background:#868a8a"></div>
<div class="abs" style="left:22px;top:549px;width:1161px;height:1px;background:#868a8a"></div>
<div class="abs" style="left:22px;top:564px;width:1161px;height:1px;background:#868a8a"></div>
<div class="abs" style="left:22px;top:579px;width:1161px;height:1px;background:#868a8a"></div>
<div class="abs" style="left:22px;top:594px;width:1161px;height:1px;background:#868a8a"></div>
<div class="abs" style="left:22px;top:609px;width:1161px;height:1px;background:#868a8a"></div>
<div class="abs" style="left:22px;top:624px;width:1161px;height:1px;background:#868a8a"></div>
<div class="abs" style="left:22px;top:639px;width:1161px;height:1px;background:#868a8a"></div>
<div class="abs" style="left:22px;top:654px;width:1161px;height:1px;background:#868a8a"></div>
<div class="abs" style="left:22px;top:669px;width:1161px;height:1px;background:#868a8a"></div>
<div class="abs" style="left:22px;top:684px;width:1161px;height:1px;background:#868a8a"></div>
<div class="abs" style="left:22px;top:699px;width:1161px;height:1px;background:#868a8a"></div>
<div class="abs" style="left:22px;top:714px;width:1161px;height:1px;background:#868a8a"></div>
<div class="abs" style="left:22px;top:729px;width:1161px;height:1px;background:#868a8a"></div>
<div class="abs" style="left:22px;top:744px;width:1161px;height:1px;background:#868a8a"></div>
<div class="abs" style="left:22px;top:759px;width:1161px;height:1px;background:#868a8a"></div>
<div class="abs" style="left:22px;top:774px;width:1161px;height:1px;background:#868a8a"></div>
<div class="abs" style="left:96px;top:202px;width:1px;height:17px;background:#8f8f8f"></div>
<div class="abs" style="left:96px;top:219px;width:1px;height:560px;background:#868a8a"></div>
<div class="abs" style="left:296px;top:202px;width:1px;height:17px;background:#8f8f8f"></div>
<div class="abs" style="left:296px;top:219px;width:1px;height:560px;background:#868a8a"></div>
<div class="abs" style="left:386px;top:202px;width:1px;height:17px;background:#8f8f8f"></div>
<div class="abs" style="left:386px;top:219px;width:1px;height:560px;background:#868a8a"></div>
<div class="abs" style="left:476px;top:202px;width:1px;height:17px;background:#8f8f8f"></div>
<div class="abs" style="left:476px;top:219px;width:1px;height:560px;background:#868a8a"></div>
<div class="abs" style="left:626px;top:202px;width:1px;height:17px;background:#8f8f8f"></div>
<div class="abs" style="left:626px;top:219px;width:1px;height:560px;background:#868a8a"></div>
<div class="abs" style="left:746px;top:202px;width:1px;height:17px;background:#8f8f8f"></div>
<div class="abs" style="left:746px;top:219px;width:1px;height:560px;background:#868a8a"></div>
<div class="abs" style="left:776px;top:202px;width:1px;height:17px;background:#8f8f8f"></div>
<div class="abs" style="left:776px;top:219px;width:1px;height:560px;background:#868a8a"></div>
<div class="abs" style="left:836px;top:202px;width:1px;height:17px;background:#8f8f8f"></div>
<div class="abs" style="left:836px;top:219px;width:1px;height:560px;background:#868a8a"></div>
<div class="abs" style="left:926px;top:202px;width:1px;height:17px;background:#8f8f8f"></div>
<div class="abs" style="left:926px;top:219px;width:1px;height:560px;background:#868a8a"></div>
<div class="abs" style="left:1016px;top:202px;width:1px;height:17px;background:#8f8f8f"></div>
<div class="abs" style="left:1016px;top:219px;width:1px;height:560px;background:#868a8a"></div>
<div class="abs" style="left:1166px;top:202px;width:1px;height:17px;background:#8f8f8f"></div>
<div class="abs" style="left:1166px;top:219px;width:1px;height:560px;background:#868a8a"></div>
<div class="abs" style="left:1182px;top:202px;width:1px;height:17px;background:#8f8f8f"></div>
<div class="abs" style="left:1182px;top:219px;width:1px;height:560px;background:#868a8a"></div>
<div class="abs" style="left:22px;top:219px;width:1px;height:560px;background:#868a8a"></div>
<div class="abs" style="left:1183px;top:218px;width:11px;height:2px;background:#000"></div>
<div class="abs" style="left:22px;top:766px;width:1172px;height:93px;background:#fff"></div>
<div class="abs" style="left:26px;top:766px;width:606px;height:1px;background:#4d7ab8"></div>
<div class="lab" style="top:781px">Company</div>
<div class="lab" style="top:800px">First &amp; Last</div>
<div class="lab" style="top:819px">Website</div>
<div class="lab" style="top:838px;left:2.5px">Employment Date</div>
<div class="fld" style="left:161px;top:781px;width:200px">Bohnen, Thomas P Esq</div>
<div class="fld" style="left:161px;top:800px;width:90px">Cara</div>
<div class="fld" style="left:271px;top:800px;width:90px">Hingst</div>
<div class="fld" style="left:161px;top:819px;width:200px">http:<span style="letter-spacing:1.3px">//</span>www.carahingst.com</div>
<div class="fld" style="left:161px;top:838px;width:200px"></div>
</body></html>
